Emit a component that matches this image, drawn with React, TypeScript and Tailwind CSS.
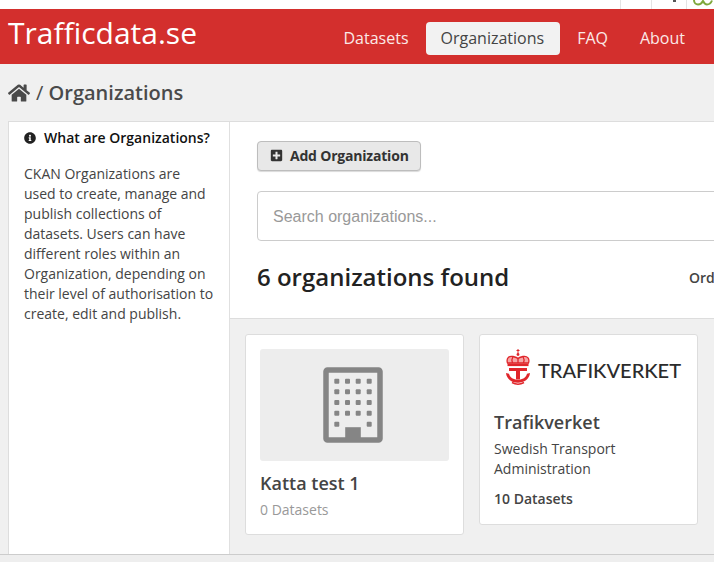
import { FaHome, FaInfoCircle, FaPlusSquare } from "react-icons/fa";

function BuildingIcon() {
  const xs = [336.3, 347, 357.7, 368.7];
  const ys = [381.7, 392.3, 403, 413.7];
  return (
    <svg className="mr-[4px] shrink-0" width="60" height="76" viewBox="322.5 367.5 60 76" fill="#858585">
      <rect x="325.5" y="370.5" width="54" height="70" rx="1.5" fill="none" stroke="#858585" strokeWidth="5.5" />
      {ys.map((y) => xs.map((x) => <rect key={`${x}-${y}`} x={x - 2.5} y={y - 2.5} width="5" height="5" rx="1" />))}
      <rect x={xs[0] - 2.5} y="422.2" width="5" height="5" rx="1" />
      <rect x={xs[3] - 2.5} y="422.2" width="5" height="5" rx="1" />
      <rect x="344.7" y="427.7" width="15.6" height="13" />
    </svg>
  );
}

function TrafikverketEmblem() {
  return (
    <svg className="shrink-0" width="26" height="36" viewBox="0 0 26 36" fill="none">
      <path d="M13 0v4M11.5 1.500h3" stroke="#e0262b" strokeWidth="1" />
      <circle cx="13" cy="5.500" r="1.400" fill="#e0262b" />
      <path d="M2.500 14C1 9.500 4 6.500 8 7.500c2 .5 4 1 5 2 1-1 3-1.500 5-2 4-1 7 2 5.500 6.500z" fill="#f6a5a5" stroke="#e0262b" strokeWidth="1.300" />
      <path d="M8 7.500C6.800 9.500 6.800 12 7.500 14M13 9v5M18 7.500c1.200 2 1.200 4.500.5 6.500" stroke="#e0262b" strokeWidth="1.300" />
      <rect x="2.500" y="14.500" width="21" height="2.600" fill="#e0262b" />
      <path d="M4 19h18v3h-7v8.500h-4V22H4z" fill="#e0262b" />
      <path d="M1 24c.5 6 6 9.800 12 9.800S24.500 30 25 24l-3 .8c-.8 3.800-4.500 6-9 6s-8.200-2.200-9-6z" fill="#e0262b" />
      <path d="M7 33.500c3.500 2 8.500 2 12 0" stroke="#e0262b" strokeWidth="1.500" />
    </svg>
  );
}

export default function App() {
  return (
    <div className="flex h-[562px] w-[714px] flex-col overflow-hidden bg-[#f0f0f0] font-['Open_Sans',sans-serif] text-[14px] text-[#444]">
      <div className="relative h-[9px] shrink-0 bg-white">
        <div className="absolute left-[620px] top-0 h-[9px] w-px bg-[#e4e4e4]" />
        <div className="absolute left-[651px] top-0 h-[9px] w-px bg-[#e4e4e4]" />
        <div className="absolute left-[686px] top-0 h-[9px] w-px bg-[#e4e4e4]" />
        <div className="absolute left-[673px] top-0 h-[2px] w-[3px] bg-[#555]" />
        <svg className="absolute left-[693px] top-0" width="21" height="6" viewBox="0 0 21 6" fill="none" stroke="#7fa83c" strokeWidth="2">
          <path d="M1 0c0 3 2 4.500 4 4.500S9 3 10 1c1 2 2 3.500 4 3.500s4-1.500 5-4" />
        </svg>
      </div>

      <header className="flex h-[55px] shrink-0 items-center justify-between bg-[#d32f2d] pl-[8px] pr-[14px]">
        <a className="mb-[8px] text-[30px] leading-[40px] text-white">Trafficdata.se</a>
        <nav className="mt-[3px] flex items-center gap-[2px] text-[16px] leading-[33px] text-[#fbe9e7]">
          <a className="px-[15px]">Datasets</a>
          <a className="rounded-[4px] bg-[#f2f2f2] pl-[15px] pr-[16px] text-[#444]">Organizations</a>
          <a className="px-[15px]">FAQ</a>
          <a className="px-[15px]">About</a>
        </nav>
      </header>

      <div className="flex h-[57px] shrink-0 items-center gap-[6px] pl-[8px] text-[20px] font-semibold text-[#4a4a4a]">
        <FaHome className="text-[#4a4a4a]" size={22} />
        <span><span className="font-normal">/</span> Organizations</span>
      </div>

      <div className="ml-[8px] flex h-[433px] shrink-0 border-l border-t border-[#ddd] bg-white">
        <aside className="w-[221px] shrink-0 border-r border-[#e0e0e0] px-[15px] pt-[6px]">
          <h2 className="flex items-center gap-[8px] text-[14px] font-semibold leading-[20px] text-[#111]">
            <FaInfoCircle size={12} className="text-[#222]" />
            What are Organizations?
          </h2>
          <p className="mt-[16px] leading-[20px] text-[#444]">
            CKAN Organizations are used to create, manage and publish collections of datasets. Users can have different roles within an Organization, depending on their level of authorisation to create, edit and publish.
          </p>
        </aside>

        <main className="flex min-w-0 flex-1 flex-col overflow-hidden">
          <div className="h-[197px] shrink-0 border-b border-[#ddd] pl-[27px] pt-[19px]">
            <button className="flex h-[30px] w-[164px] items-center gap-[7px] rounded-[4px] border border-[#bdbdbd] bg-[#e8e8e8] pb-[2px] pl-[12px] text-[14px] font-bold tracking-[-0.2px] text-[#333] shadow-[0_1px_1px_rgba(0,0,0,0.15)]">
              <FaPlusSquare size={13} className="text-[#333]" />
              Add Organization
            </button>
            <div className="mt-[20px] flex h-[50px] w-[600px] items-center rounded-[4px] border border-[#ccc] bg-white pl-[15px] pt-[1px] font-['Liberation_Sans',sans-serif] text-[16px] text-[#999]">
              Search organizations...
            </div>
            <div className="mt-[18px] flex w-[500px] items-center justify-between">
              <h1 className="text-[24px] font-semibold leading-[36px] text-[#222]">6 organizations found</h1>
              <span className="w-[68px] shrink-0 whitespace-nowrap text-[14px] font-semibold text-[#444]">Order by</span>
            </div>
          </div>

          <div className="flex flex-1 items-start gap-[15px] bg-[#f0f0f0] pl-[15px] pt-[15px]">
            <article className="h-[201px] w-[219px] shrink-0 rounded-[3px] border border-[#ddd] bg-white p-[14px]">
              <div className="flex h-[112px] items-center justify-center rounded-[3px] bg-[#ededed]">
                <BuildingIcon />
              </div>
              <h3 className="mt-[8px] text-[18px] font-semibold leading-[28px] text-[#444]">Katta test 1</h3>
              <p className="mt-[3px] leading-[20px] text-[#999]">0 Datasets</p>
            </article>

            <article className="h-[191px] w-[219px] shrink-0 rounded-[3px] border border-[#ddd] bg-white p-[14px]">
              <div className="flex h-[51px] items-start gap-[7px] pl-[11px]">
                <TrafikverketEmblem />
                <span className="mt-[9px] whitespace-nowrap font-['Lato',sans-serif] text-[20px] font-medium leading-[24px] text-[#2b2b2b]">TRAFIKVERKET</span>
              </div>
              <h3 className="mt-[8px] text-[18px] font-semibold leading-[28px] text-[#444]">Trafikverket</h3>
              <p className="mt-[3px] leading-[20px] text-[#444]">Swedish Transport Administration</p>
              <p className="mt-[10px] font-semibold leading-[20px] text-[#444]">10 Datasets</p>
            </article>
          </div>
        </main>
      </div>

      <div className="flex-1 border-t border-[#ccc] bg-[#eee]" />
    </div>
  );
}
